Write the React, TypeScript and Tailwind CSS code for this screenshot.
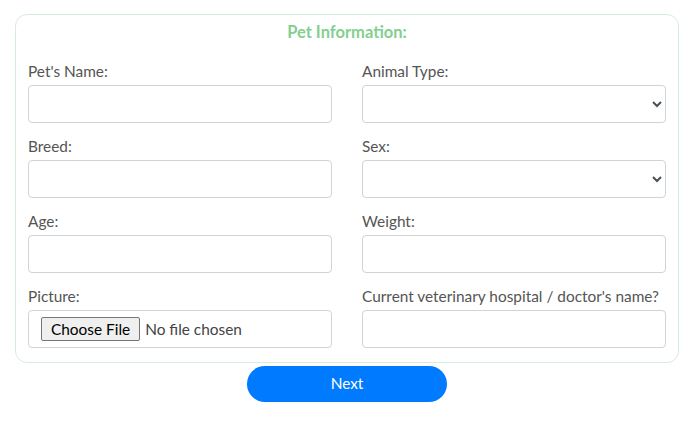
import React from "react";

const Field = (props: { label: string; children: React.ReactNode }) => {
  return (
    <div className="flex flex-col">
      <label className="text-[15.4px] leading-[21px] text-[#555] mb-[3px]">
        {props.label}
      </label>
      {props.children}
    </div>
  );
};

const inputCls =
  "h-[38px] w-full rounded-[4px] border border-[#ced4da] bg-white px-3 text-[15px] text-[#495057] outline-none";

const App = () => {
  return (
    <div
      className="w-[692px] h-[423px] bg-white"
      style={{ fontFamily: "Lato, 'Noto Sans', sans-serif" }}
    >
      <section className="ml-[15px] mt-[14px] w-[664px] rounded-[12px] border border-[#d6edd9] px-3 pt-[7px] pb-[14px]">
        <h2 className="text-center text-[16.5px] leading-[20px] font-bold text-[#84cf8f]">
          Pet Information:
        </h2>
        <div className="mt-[19px] grid grid-cols-2 gap-x-[30px] gap-y-[13px]">
          <Field label="Pet's Name:">
            <input type="text" className={inputCls} />
          </Field>
          <Field label="Animal Type:">
            <select className={inputCls + " pr-2"}>
              <option></option>
            </select>
          </Field>
          <Field label="Breed:">
            <input type="text" className={inputCls} />
          </Field>
          <Field label="Sex:">
            <select className={inputCls + " pr-2"}>
              <option></option>
            </select>
          </Field>
          <Field label="Age:">
            <input type="text" className={inputCls} />
          </Field>
          <Field label="Weight:">
            <input type="text" className={inputCls} />
          </Field>
          <Field label="Picture:">
            <input
              type="file"
              className="h-[38px] w-full rounded-[4px] border border-[#ced4da] bg-white px-3 pt-[6px] text-[15.4px] text-[#444] file:mr-[5px] file:h-[24px] file:rounded-[2px] file:border file:border-[#767676] file:bg-[#efefef] file:px-[9px] file:text-[15.4px] file:text-black"
            />
          </Field>
          <Field label="Current veterinary hospital / doctor's name?">
            <input type="text" className={inputCls} />
          </Field>
        </div>
      </section>
      <div className="flex justify-center pl-[2px] mt-[3px]">
        <button className="h-[36px] w-[200px] rounded-full bg-[#007bff] text-[15.4px] text-white">
          Next
        </button>
      </div>
    </div>
  );
};

export default App;
